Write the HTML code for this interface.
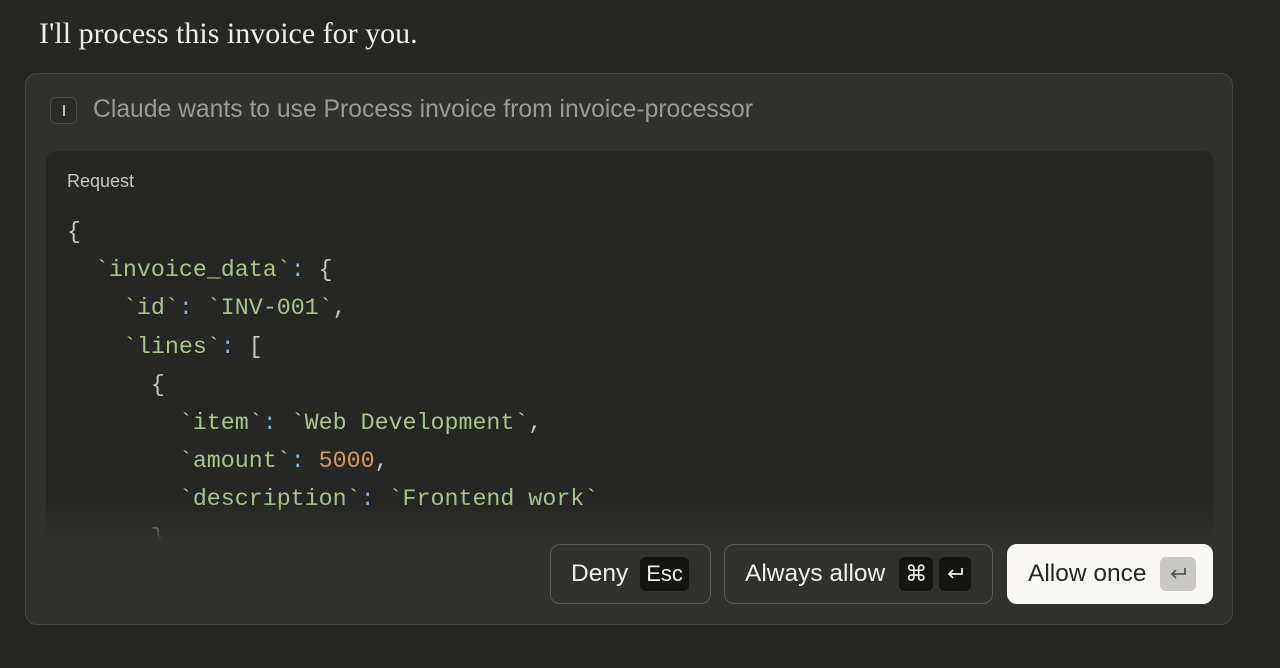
<!DOCTYPE html>
<html><head><meta charset="utf-8"><style>
*{margin:0;padding:0;box-sizing:border-box}
body{width:1280px;height:668px;background:#262624;font-family:"Liberation Sans",sans-serif;position:relative;overflow:hidden}
.intro{position:absolute;left:39px;top:17px;font-family:"Liberation Serif",serif;font-size:30px;color:#f0eee6}
.card{position:absolute;left:25px;top:73px;width:1208px;height:552px;background:#30302e;border:1px solid #444441;border-radius:12px}
.hdr{position:absolute;left:24px;top:22px;display:flex;align-items:center}
.ib{width:27px;height:27px;border:1px solid #4a4a47;border-radius:6px;background:#2a2a28;display:flex;align-items:center;justify-content:center}
.ib i{width:2px;height:11px;background:#bbb}
.hdr span{margin-left:16px;font-size:24.7px;color:#9c9a92}
.code{position:absolute;left:20px;top:77px;width:1167px;height:390px;background:#262624;border-radius:10px 10px 0 0;overflow:hidden}
.code .lbl{position:absolute;left:21px;top:20px;font-size:18px;color:#c8c6be}
pre{position:absolute;left:21px;top:62px;font-family:"Liberation Mono",monospace;font-size:23.3px;line-height:38.2px;color:#c8c6be}
.s{color:#a8c48a}.n{color:#d19a66}.p{color:#7fb0e0}
.fade{position:absolute;left:0;bottom:0;width:100%;height:40px;background:linear-gradient(rgba(48,48,46,0),#30302e)}
.btn{position:absolute;top:470px;height:60px;border:1px solid #575754;border-radius:10px;display:flex;align-items:center;font-size:24.5px;color:#f0eee6;padding:0 14px 0 20px}
.k{height:34px;min-width:32px;background:#141413;border-radius:6px;display:flex;align-items:center;justify-content:center;font-size:22px;color:#f0eee6;margin-left:8px;padding:0 6px}
.w{background:#f9f8f4;border-color:#f9f8f4;color:#262624}
.w .k{background:#c9c8c2;color:#444}
</style></head><body>
<div class="intro">I'll process this invoice for you.</div>
<div class="card">
<div class="hdr"><div class="ib"><i></i></div><span>Claude wants to use Process invoice from invoice-processor</span></div>
<div class="code"><div class="lbl">Request</div>
<pre>{
  <span class="s">`invoice_data`</span><span class="p">:</span> {
    <span class="s">`id`</span><span class="p">:</span> <span class="s">`INV-001`</span>,
    <span class="s">`lines`</span><span class="p">:</span> [
      {
        <span class="s">`item`</span><span class="p">:</span> <span class="s">`Web Development`</span>,
        <span class="s">`amount`</span><span class="p">:</span> <span class="n">5000</span>,
        <span class="s">`description`</span><span class="p">:</span> <span class="s">`Frontend work`</span>
      },</pre>
<div class="fade"></div></div>
<div class="btn" style="left:524px;width:161px">Deny<div class="k" style="margin-left:12px">Esc</div></div>
<div class="btn" style="left:698px;width:269px">Always allow<div class="k" style="margin-left:14px">⌘</div><div class="k" style="margin-left:6px"><svg width="20" height="16" viewBox="0 0 20 16" fill="none" stroke="#f0eee6" stroke-width="1.8"><path d="M17 2v6H4M8 4L4 8l4 4"/></svg></div></div>
<div class="btn w" style="left:981px;width:206px">Allow once<div class="k" style="margin-left:14px;width:36px"><svg width="20" height="16" viewBox="0 0 20 16" fill="none" stroke="#555" stroke-width="1.8"><path d="M17 2v6H4M8 4L4 8l4 4"/></svg></div></div>
</div>
</body></html>
